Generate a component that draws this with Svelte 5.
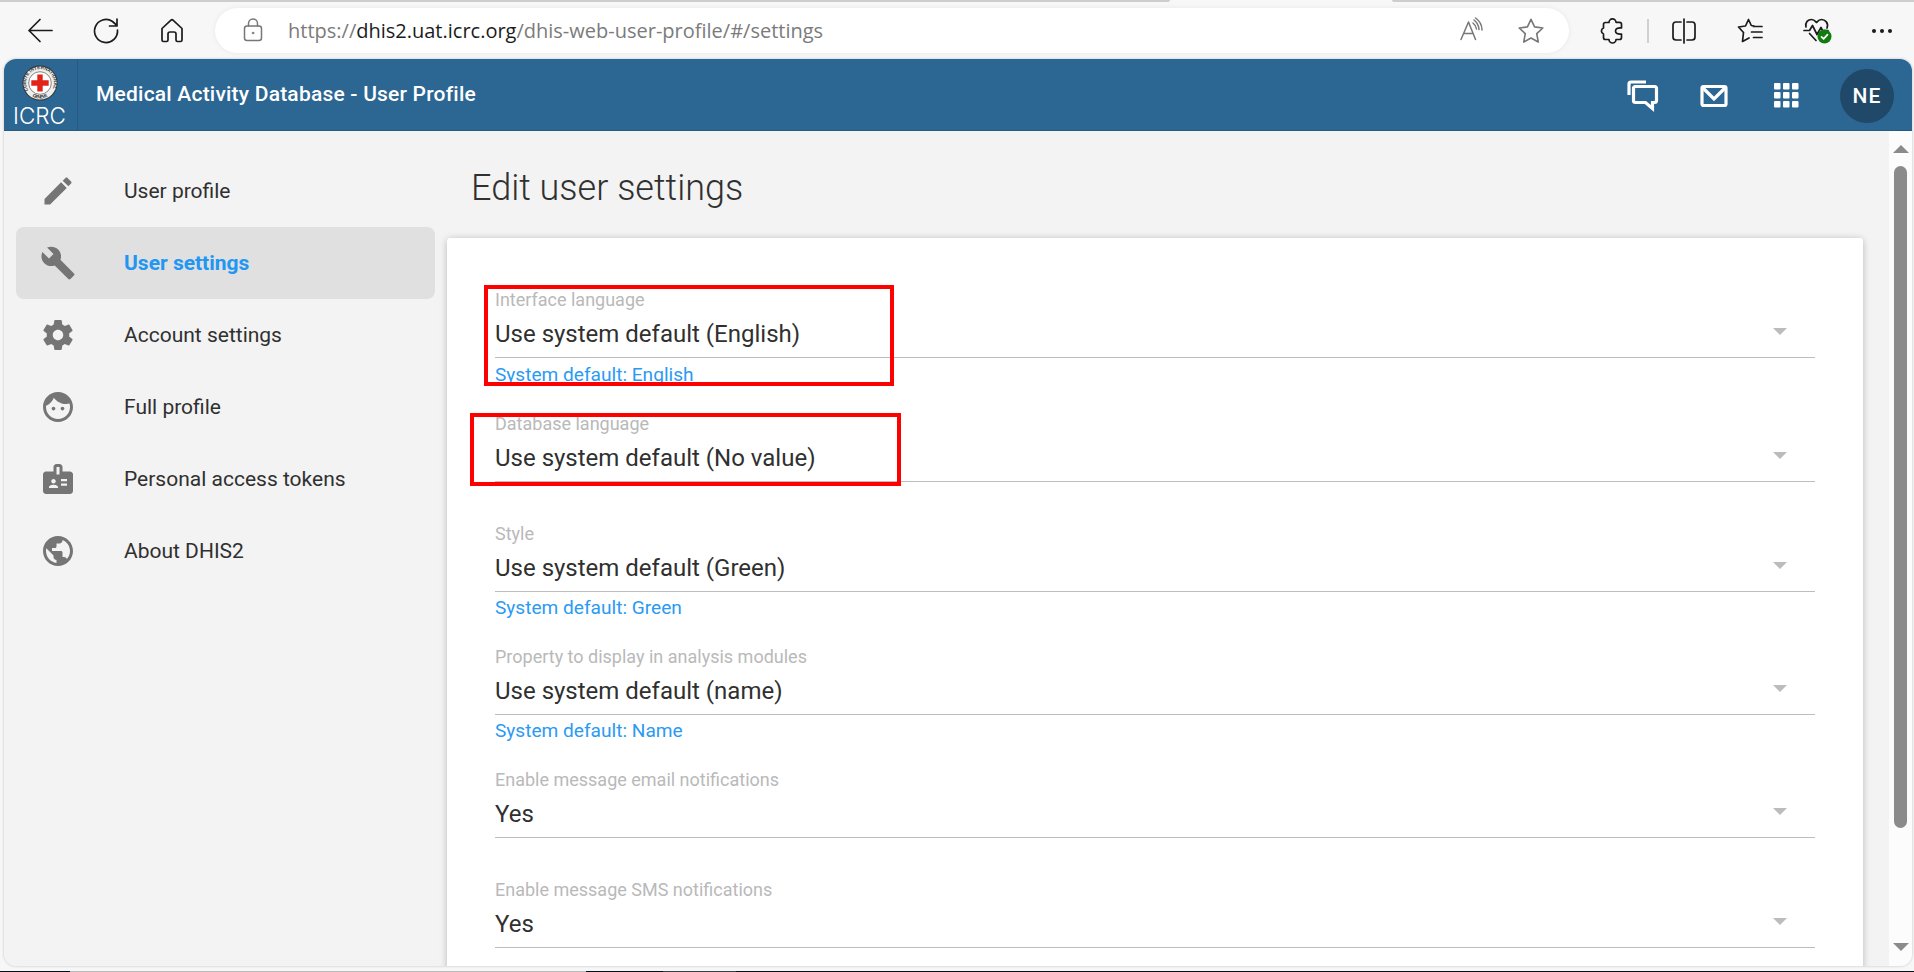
<script>
  const navItems = [
    { label: 'User profile', d: 'M3 17.25V21h3.75L17.81 9.94l-3.75-3.75L3 17.25zM20.71 7.04c.39-.39.39-1.02 0-1.41l-2.34-2.34c-.39-.39-1.02-.39-1.41 0l-1.83 1.83 3.75 3.75 1.83-1.83z' },
    { label: 'User settings', active: true, d: 'M22.7 19l-9.1-9.1c.9-2.3.4-5-1.5-6.9-2-2-5-2.4-7.4-1.3L9 6 6 9 1.6 4.7C.4 7.1.9 10.1 2.9 12.1c1.9 1.9 4.6 2.4 6.9 1.5l9.1 9.1c.4.4 1 .4 1.4 0l2.3-2.3c.5-.4.5-1.1.1-1.4z' },
    { label: 'Account settings', d: 'M19.43 12.98c.04-.32.07-.64.07-.98s-.03-.66-.07-.98l2.11-1.65c.19-.15.24-.42.12-.64l-2-3.46c-.12-.22-.39-.3-.61-.22l-2.49 1c-.52-.4-1.08-.73-1.69-.98l-.38-2.65C14.46 2.18 14.25 2 14 2h-4c-.25 0-.46.18-.49.42l-.38 2.65c-.61.25-1.17.59-1.69.98l-2.49-1c-.23-.09-.49 0-.61.22l-2 3.46c-.13.22-.07.49.12.64l2.11 1.65c-.04.32-.07.65-.07.98s.03.66.07.98l-2.11 1.65c-.19.15-.24.42-.12.64l2 3.46c.12.22.39.3.61.22l2.49-1c.52.4 1.08.73 1.69.98l.38 2.65c.03.24.24.42.49.42h4c.25 0 .46-.18.49-.42l.38-2.65c.61-.25 1.17-.59 1.69-.98l2.49 1c.23.09.49 0 .61-.22l2-3.46c.12-.22.07-.49-.12-.64l-2.11-1.65zM12 15.5c-1.93 0-3.5-1.57-3.5-3.5s1.57-3.5 3.5-3.5 3.5 1.57 3.5 3.5-1.57 3.5-3.5 3.5z' },
    { label: 'Full profile', d: 'M9 11.75c-.69 0-1.25.56-1.25 1.25s.56 1.25 1.25 1.25 1.25-.56 1.25-1.25-.56-1.25-1.25-1.25zm6 0c-.69 0-1.25.56-1.25 1.25s.56 1.25 1.25 1.25 1.25-.56 1.25-1.25-.56-1.25-1.25-1.25zM12 2C6.48 2 2 6.48 2 12s4.48 10 10 10 10-4.48 10-10S17.52 2 12 2zm0 18c-4.41 0-8-3.59-8-8 0-.29.02-.58.05-.86 2.36-1.05 4.23-2.98 5.21-5.37C11.07 8.33 14.05 10 17.42 10c.78 0 1.53-.09 2.25-.26.21.71.33 1.47.33 2.26 0 4.41-3.59 8-8 8z' },
    { label: 'Personal access tokens', d: 'M20 7h-5V4c0-1.1-.9-2-2-2h-2c-1.1 0-2 .9-2 2v3H4c-1.1 0-2 .9-2 2v11c0 1.1.9 2 2 2h16c1.1 0 2-.9 2-2V9c0-1.1-.9-2-2-2zM9 12c.83 0 1.5.67 1.5 1.5S9.83 15 9 15s-1.5-.67-1.5-1.5S8.17 12 9 12zm3 6H6v-.75c0-1 2-1.5 3-1.5s3 .5 3 1.5V18zm1-9h-2V4h2v5zm5 7.5h-4V15h4v1.5zm0-3h-4V12h4v1.5z' },
    { label: 'About DHIS2', d: 'M12 2C6.48 2 2 6.48 2 12s4.48 10 10 10 10-4.48 10-10S17.52 2 12 2zm-1 17.93c-3.95-.49-7-3.85-7-7.93 0-.62.08-1.21.21-1.79L9 15v1c0 1.1.9 2 2 2v1.93zm6.9-2.54c-.26-.81-1-1.39-1.9-1.39h-1v-3c0-.55-.45-1-1-1H8v-2h2c.55 0 1-.45 1-1V7h2c1.1 0 2-.9 2-2v-.41c2.93 1.19 5 4.06 5 7.41 0 2.08-.8 3.97-2.1 5.39z' }
  ];

  const fields = [
    { label: 'Interface language', value: 'Use system default (English)', hint: 'System default: English' },
    { label: 'Database language', value: 'Use system default (No value)' },
    { label: 'Style', value: 'Use system default (Green)', hint: 'System default: Green' },
    { label: 'Property to display in analysis modules', value: 'Use system default (name)', hint: 'System default: Name' },
    { label: 'Enable message email notifications', value: 'Yes' },
    { label: 'Enable message SMS notifications', value: 'Yes' }
  ];

  const star = 'M12 1.2l3.3 7 7.6 1-5.6 5.3 1.4 7.7L12 18.5l-6.7 3.7 1.4-7.7L1.1 9.2l7.6-1z';
</script>

<div class="window">
  <div class="tabstrip"><span></span><span></span></div>
  <div class="toolbar">
    <svg class="back" width="26" height="24" viewBox="0 0 26 24"><path d="M25 11.5H2M13 .5L2 11.5l11 11" /></svg>
    <svg class="reload" width="26" height="26" viewBox="0 0 26 26"><path d="M24.5 12A11.5 11.5 0 1 1 19.5 3.500L24 7.500M24 1v7h-7.500" /></svg>
    <svg class="home" width="24" height="25" viewBox="0 0 24 25"><path d="M2 10.500L11 2.200q1-.9 2 0l9 8.300V22q0 1.500-1.500 1.500h-3Q16 23.500 16 22v-6q0-2-2-2h-4q-2 0-2 2v6q0 1.500-1.500 1.500h-3Q2 23.500 2 22z" /></svg>
    <div class="address">
      <svg class="lock" width="20" height="24" viewBox="0 0 20 24"><rect x="1.500" y="8" width="17" height="14.500" rx="2.500" /><path d="M5.500 8V5.500a4.500 4.500 0 0 1 9 0V8" /><circle cx="10" cy="15" r="1" /></svg>
      <span class="url">https://<b>dhis2.uat.icrc.org</b>/dhis-web-user-profile/#/settings</span>
      <svg class="aloud" width="24" height="24" viewBox="0 0 24 24"><path d="M1 21.500L8.500 4l7 17.500M3.500 15.500h9.500M13 5q3 2.500 3.500 6M14 2q4.500 3.500 5 9.500M15.500 0q6.500 4.500 6.500 12" /></svg>
      <svg class="fav" width="26" height="26" viewBox="0 0 24 24"><path d={star} /></svg>
    </div>
    <svg class="puzzle" width="24" height="26" viewBox="0 0 24 26"><path d="M5.500 4.500H9a3.500 3.500 0 0 1 7-.2h3.500q2 0 2 2V10q-6-.5-6 3t6 3v3.500q0 2-2 2H16a3.500 3.500 0 0 1-7 0H5.500q-2 0-2-2V16a3.200 3.200 0 0 1 0-6V6.500q0-2 2-2z" /></svg>
    <i class="sep"></i>
    <svg class="split" width="26" height="26" viewBox="0 0 26 26"><path d="M10 4H5Q2 4 2 7v12q0 3 3 3h5M16 4h5q3 0 3 3v12q0 3-3 3h-5M13 1v24" /></svg>
    <svg class="favlist" width="26" height="26" viewBox="0 0 26 26"><path d="M17 8l-2.700-.5L11.500 1.500 8.500 8 1.500 9l5 5.500L5.500 23.500l6.500-3.500M16.500 8.500H25M14.500 14H25M16.500 19.500H25" /></svg>
    <svg class="health" width="29" height="26" viewBox="0 0 29 26">
      <path d="M3 9C2 4 5 1.500 8.500 1.500c3 0 4 2 5 3 1-1 2-3 5-3C22 1.500 26 5 24 10M1 12.500h5.500l3-5 4.500 9 4-7 1.500 3H25M6.500 15.500L13 22.500" />
      <circle class="ok" cx="21.500" cy="18.500" r="7" /><path class="tick" d="M18.500 18.800l2.100 2.100 3.900-4.200" />
    </svg>
    <svg class="dots" width="22" height="6" viewBox="0 0 22 6"><circle cx="3" cy="3" r="2" /><circle cx="11" cy="3" r="2" /><circle cx="19" cy="3" r="2" /></svg>
  </div>

  <div class="page">
    <header>
      <div class="logo">
        <svg width="36" height="36" viewBox="0 0 36 36">
          <circle cx="18" cy="18" r="17.500" fill="#333" />
          <circle cx="18" cy="18" r="16.600" fill="#eeeeec" />
          <circle cx="18" cy="18" r="11.300" fill="#fff" stroke="#555" stroke-width=".7" />
          <defs>
            <path id="arc-top" d="M6.300 25.500A13.900 13.900 0 1 1 29.700 25.500" />
            <path id="arc-bottom" d="M5.800 27.400A15.400 15.400 0 0 0 30.200 27.400" />
          </defs>
          <text class="ring"><textPath href="#arc-top" textLength="57">COMITE INTERNATIONAL</textPath></text>
          <text class="ring"><textPath href="#arc-bottom" startOffset="6" textLength="16">GENEVE</textPath></text>
          <path d="M15.300 9.500h5.400v5.800h6v5.400h-6v5.800h-5.400v-5.800h-6v-5.400h6z" fill="#e2231a" />
        </svg>
        <span>ICRC</span>
      </div>
      <h1>Medical Activity Database - User Profile</h1>
      <svg class="chat" width="32" height="32" viewBox="0 0 32 32"><path d="M2 15V4q0-2 2-2h15" /><path d="M8.500 6.500h19q2 0 2 2v12q0 2-2 2h-2v6l-7-6h-10q-2 0-2-2v-12q0-2 2-2z" /></svg>
      <svg class="mail" width="28" height="24" viewBox="0 0 28 24"><rect x="2" y="2.500" width="24" height="19" rx="1.500" /><path d="M3 4l11 11L25 4" /></svg>
      <svg class="apps" width="26" height="26" viewBox="0 0 26 26">
        {#each [0, 9, 18] as y}{#each [0, 9, 18] as x}<rect {x} {y} width="6.500" height="6.500" rx="1" />{/each}{/each}
      </svg>
      <div class="avatar">NE</div>
    </header>

    <div class="body">
      <nav>
        {#each navItems as item}
          <div class="item" class:active={item.active}>
            <svg width="36" height="36" viewBox="0 0 24 24"><path d={item.d} /></svg>
            <span>{item.label}</span>
          </div>
        {/each}
      </nav>
      <main>
        <h2>Edit user settings</h2>
        <div class="card">
          {#each fields as f}
            <div class="field" class:hinted={f.hint}>
              <div class="label">{f.label}</div>
              <div class="select"><span>{f.value}</span><i class="caret"></i></div>
              {#if f.hint}<div class="hint">{f.hint}</div>{/if}
            </div>
          {/each}
        </div>
      </main>
      <div class="scroll"><i class="up"></i><div class="thumb"></div><i class="down"></i></div>
    </div>
  </div>
  <div class="taskbar"><span></span><span></span><span></span><span></span></div>
  <div class="mark first"></div>
  <div class="mark second"></div>
</div>

<style>
  :global(body) { margin: 0; overflow: hidden; }
  * { box-sizing: border-box; }
  .window { position: relative; width: 1914px; height: 972px; overflow: hidden; display: flex; flex-direction: column; background: #f7f7f7; font-family: Roboto, sans-serif; color: #303030; }
  svg { flex: none; display: block; overflow: visible; }

  .tabstrip { height: 2px; display: flex; justify-content: space-between; }
  .tabstrip span { background: #cdcdcd; width: 1170px; border-radius: 0 0 3px 0; }
  .tabstrip span + span { width: 522px; border-radius: 0 0 0 3px; }
  .toolbar { height: 57px; display: flex; align-items: center; padding: 0 21px 0 27px; }
  .toolbar svg { fill: none; stroke: #1b1b1b; stroke-width: 1.7; stroke-linecap: round; stroke-linejoin: round; }
  .reload { margin-left: 40px; }
  .home { margin-left: 41px; }
  .address { margin-left: 31px; width: 1354px; height: 45px; border-radius: 23px; background: #fff; display: flex; align-items: center; padding: 0 25px 0 28px; box-shadow: 0 0 4px #e6e6e6; }
  .address svg { stroke: #777; stroke-width: 1.5; }
  .lock { margin-top: -2px; }
  .lock circle { fill: #777; stroke-width: .5; }
  .url { margin-left: 25px; font: 20px/45px "Open Sans", "Noto Sans", sans-serif; color: #7b7b7b; white-space: nowrap; flex: 1; }
  .url b { font-weight: 400; color: #1b1b1b; }
  .aloud { margin-top: -2px; }
  .fav { margin-left: 34px; }
  .puzzle { margin-left: 31px; }
  .sep { width: 2px; height: 24px; background: #d0d0d0; margin-left: 23px; }
  .split { margin-left: 22px; }
  .favlist { margin-left: 40px; }
  .health { margin-left: 40px; }
  .toolbar .ok { fill: #107c10; stroke: none; }
  .toolbar .tick { stroke: #fff; }
  .dots { margin-left: auto; }
  .toolbar .dots circle { fill: #1b1b1b; stroke: none; }

  .page { margin: 0 2px 0 4px; height: 907px; flex: none; border-radius: 12px; overflow: hidden; background: #f3f3f3; display: flex; flex-direction: column; box-shadow: 0 0 2px 1px #dedede; }
  header { height: 72px; flex: none; background: #2c6693; border-bottom: 1px solid #265a85; color: #fff; display: flex; align-items: center; padding: 2px 18px 0 0; }
  .logo { width: 74px; height: 71px; margin-top: -2px; border-right: 1px solid #265a85; display: flex; flex-direction: column; align-items: center; padding: 6px 2px 0 0; }
  .logo span { font: 300 22.5px/22px Inter, Roboto, sans-serif; margin-top: 4px; }
  .ring { font: 700 4.6px "Liberation Sans", sans-serif; fill: #333; }
  h1 { margin: -4px 0 0; padding-left: 18px; flex: 1; font-size: 21px; line-height: 28px; font-weight: 500; letter-spacing: .21px; }
  header .chat, header .mail { fill: none; stroke: #fff; stroke-width: 3.2; }
  .mail { margin-left: 41px; }
  .apps { margin-left: 46px; fill: #fff; }
  .avatar { margin-left: 40px; width: 54px; height: 54px; border-radius: 50%; background: #204868; font-size: 21px; line-height: 54px; font-weight: 500; letter-spacing: 1px; text-align: center; }

  .body { flex: 1; min-height: 0; display: flex; }
  nav { width: 433px; flex: none; padding: 24px 0 24px 12px; }
  .item { height: 72px; width: 419px; display: flex; align-items: center; padding-left: 24px; border-radius: 8px; font-size: 21px; line-height: 26px; }
  .item svg { fill: #757575; }
  .item span { margin-left: 48px; }
  .active { background: #e0e0e0; }
  .active span { font-weight: 700; color: #2196f3; }
  main { width: 1442px; height: 835px; overflow: hidden; padding: 0 0 0 10px; flex: none; }
  h2 { margin: 36px 0 0 24px; font-size: 36px; line-height: 42px; font-weight: 300; }
  .card { margin-top: 29px; width: 1416px; height: 800px; background: #fff; border-radius: 3px; box-shadow: 0 1px 9px rgba(0, 0, 0, .12), 0 1px 6px rgba(0, 0, 0, .12); padding: 51px 48px 0; }
  .field { height: 110px; color: #b9b9b9; font-size: 18px; line-height: 22px; }
  .field.hinted { height: 123px; }
  .field:first-child { height: 124px; }
  .select { height: 47px; border-bottom: 1px solid #bdbdbd; display: flex; justify-content: space-between; color: #303030; font-size: 24px; line-height: 47px; padding-right: 28.5px; }
  .caret { margin-top: 17px; width: 0; height: 0; border: 7.500px solid transparent; border-top-color: #bcbcbc; border-bottom: 0; }
  .hint { color: #2b9af3; font-size: 19.1px; line-height: 24px; padding-top: 4px; }
  .field:first-child .hint { padding-top: 5px; }
  .scroll { margin-left: auto; width: 23px; background: #fcfcfc; display: flex; flex-direction: column; align-items: center; padding: 14px 0 15px; }
  .up, .down { border: 8px solid transparent; width: 0; }
  .up { border-top: 0; border-bottom-color: #8b8b8b; }
  .down { border-bottom: 0; border-top-color: #8b8b8b; margin-top: auto; }
  .thumb { margin-top: 13px; width: 13.5px; height: 662px; border-radius: 7px; background: #8b8b8b; }

  .taskbar { margin-top: auto; height: 1px; display: flex; }
  .taskbar span { width: 70px; background: #06101a; }
  .taskbar span:nth-child(2) { width: 516px; background: #bababa; }
  .taskbar span:nth-child(3) { width: 77px; }
  .taskbar span:nth-child(4) { flex: 1; background: linear-gradient(90deg, #33424a 73px, #06101a 73px); }

  .mark { position: absolute; border: 4px solid #f00; }
  .first { left: 484px; top: 285px; width: 410px; height: 101px; }
  .second { left: 470px; top: 413px; width: 431px; height: 73px; }
</style>
